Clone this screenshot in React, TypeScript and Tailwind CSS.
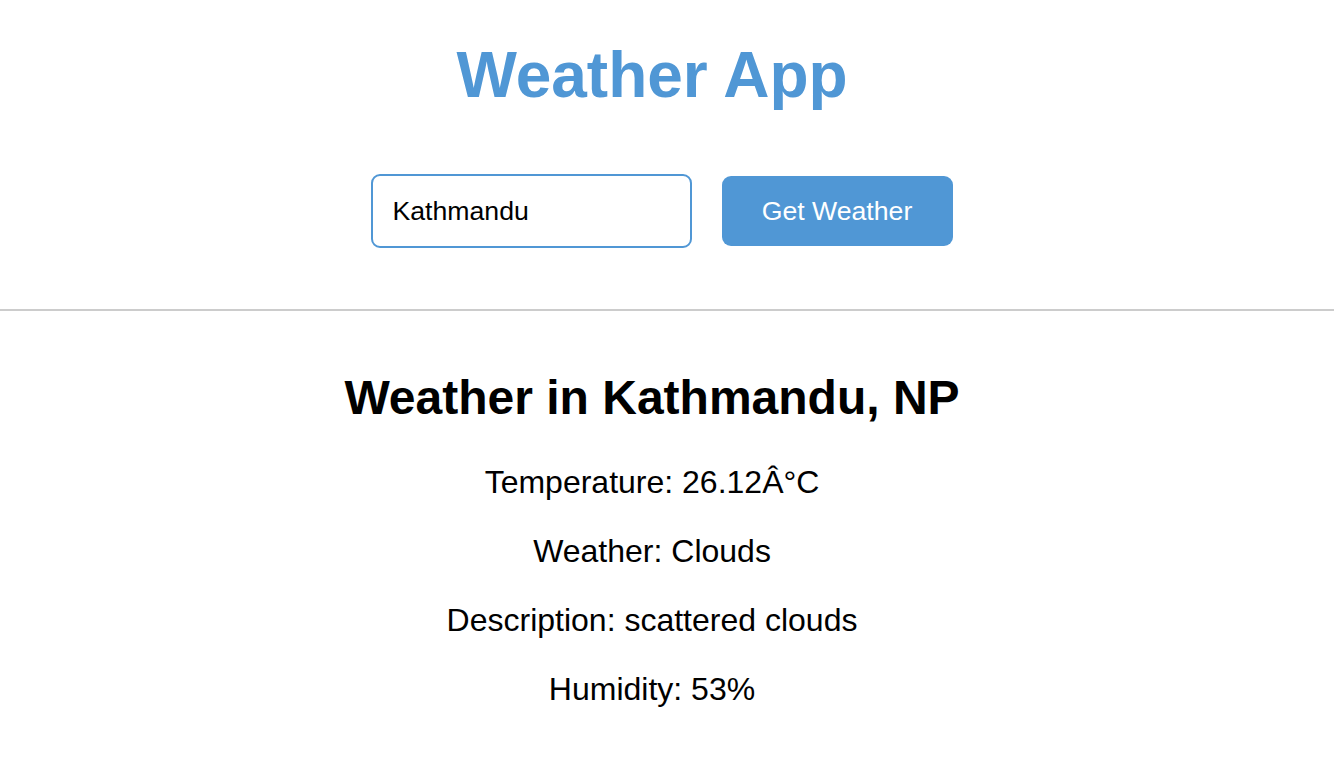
export default function App() {
  return (
    <div className="min-h-screen bg-white font-['Liberation_Sans',Arial,sans-serif] text-black">
      <header className="pt-[38px] pr-[30px] text-center">
        <h1 className="text-[64px] leading-[74px] font-bold text-[#5097d5]">Weather App</h1>
      </header>

      <div className="mt-[62px] flex items-center justify-center gap-[30px] pr-[11px]">
        <input
          type="text"
          defaultValue="Kathmandu"
          className="w-[321px] h-[74px] border-2 border-[#5097d5] rounded-[9px] px-[20px] text-[26.67px] text-black outline-none"
        />
        <button className="w-[231px] h-[70px] rounded-[9px] bg-[#5097d5] text-white text-[26.67px]">
          Get Weather
        </button>
      </div>

      <div className="mt-[61px] h-[2px] bg-[#cccccc]" />

      <section className="pt-[59px] pr-[30px] text-center">
        <h2 className="text-[48px] leading-[55px] font-bold">Weather in Kathmandu, NP</h2>
        <div className="mt-[39px] flex flex-col gap-[32px] text-[32px] leading-[37px]">
          <p>Temperature: 26.12Â°C</p>
          <p>Weather: Clouds</p>
          <p>Description: scattered clouds</p>
          <p>Humidity: 53%</p>
        </div>
      </section>
    </div>
  );
}
